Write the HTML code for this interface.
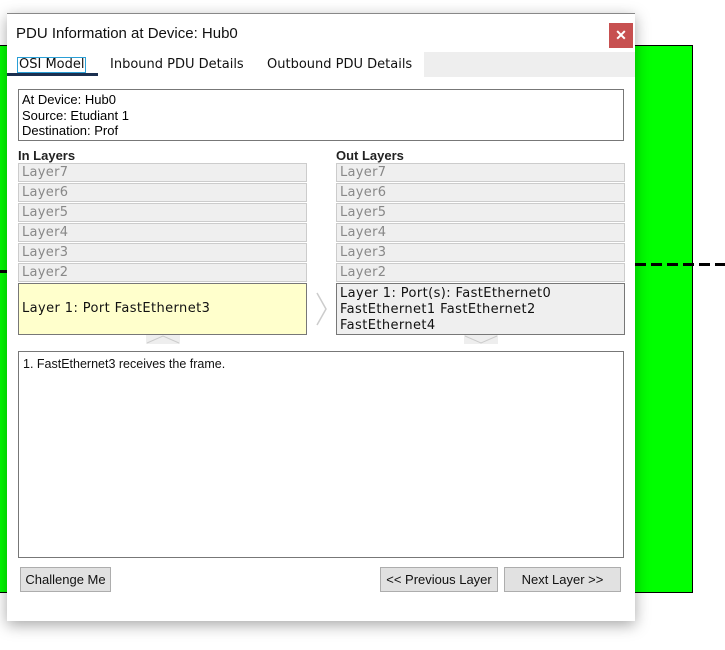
<!DOCTYPE html>
<html><head><style>
body{margin:0;width:725px;height:650px;position:relative;background:#fff;overflow:hidden;font-family:"Liberation Sans",sans-serif}
.green{position:absolute;left:-2px;top:45px;width:693px;height:546px;background:#00ff00;border:1px solid #000}
.dash{position:absolute;height:3px;background:repeating-linear-gradient(90deg,#000 0 11px,transparent 11px 16px)}
.dlg{position:absolute;left:7px;top:13px;width:628px;height:607px;background:#fff;border-top:1px solid #888;box-shadow:0 4px 14px rgba(0,0,0,.35)}
.abs{position:absolute}
.title{left:9px;top:11px;font-size:15px;color:#111}
.close{left:602px;top:9px;width:24px;height:25px;background:#c75050;color:#fff;font-size:14px;font-weight:bold;text-align:center;line-height:25px}
.tabs{font-family:"DejaVu Sans",sans-serif;font-size:13px;color:#111}
.info{left:11px;top:75px;font-size:13px;line-height:15.5px;padding:2px 3px;box-sizing:border-box;width:606px;height:52px;border:1px solid #777}
.hdr{font-size:13px;font-weight:bold;color:#222}
.ly{position:absolute;width:289px;height:19px;background:#efefef;border:1px solid #ccc;box-sizing:border-box;font-family:"DejaVu Sans",sans-serif;font-size:13px;color:#888;padding-left:3px;line-height:18px;letter-spacing:0.3px}
.l1{position:absolute;width:289px;height:52px;box-sizing:border-box;border:1px solid #777;font-family:"DejaVu Sans",sans-serif;font-size:13px;color:#111;padding:2px 3px;line-height:16px;letter-spacing:0.4px}
.btn{position:absolute;top:553px;height:25px;background:#e1e1e1;border:1px solid #adadad;box-sizing:border-box;font-size:13px;color:#111;text-align:center;line-height:23px}
</style></head><body>
<div class="green"></div>
<div class="dash" style="left:635px;top:263px;width:90px"></div>
<div class="dash" style="left:0;top:270px;width:7px"></div>
<div class="dlg">
<div class="abs title">PDU Information at Device: Hub0</div>
<div class="abs close">✕</div>
<div class="abs" style="left:417px;top:38px;width:211px;height:25px;background:#eee"></div>
<div class="abs tabs" style="left:10px;top:43px;border:1px solid #2a9fd6;padding:0 1px;line-height:14px">OSI Model</div>
<div class="abs" style="left:0;top:59px;width:91px;height:3px;background:#1b2f4f"></div>
<div class="abs tabs" style="left:103px;top:43px">Inbound PDU Details</div>
<div class="abs tabs" style="left:260px;top:43px">Outbound PDU Details</div>
<div class="abs info">At Device: Hub0<br>Source: Etudiant 1<br>Destination: Prof</div>
<div class="abs hdr" style="left:11px;top:134px">In Layers</div>
<div class="abs hdr" style="left:329px;top:134px">Out Layers</div>
<div class="ly" style="left:11px;top:149px">Layer7</div>
<div class="ly" style="left:11px;top:169px">Layer6</div>
<div class="ly" style="left:11px;top:189px">Layer5</div>
<div class="ly" style="left:11px;top:209px">Layer4</div>
<div class="ly" style="left:11px;top:229px">Layer3</div>
<div class="ly" style="left:11px;top:249px">Layer2</div>
<div class="l1" style="left:11px;top:269px;background:#ffffcc;line-height:50px;padding-top:0">Layer 1: Port FastEthernet3</div>
<div class="ly" style="left:329px;top:149px">Layer7</div>
<div class="ly" style="left:329px;top:169px">Layer6</div>
<div class="ly" style="left:329px;top:189px">Layer5</div>
<div class="ly" style="left:329px;top:209px">Layer4</div>
<div class="ly" style="left:329px;top:229px">Layer3</div>
<div class="ly" style="left:329px;top:249px">Layer2</div>
<div class="l1" style="left:329px;top:269px;background:#efefef">Layer 1: Port(s): FastEthernet0<br>FastEthernet1 FastEthernet2<br>FastEthernet4</div>
<svg class="abs" style="left:309px;top:278px" width="12" height="35"><path d="M1 1 L10 17 L1 33" fill="none" stroke="#ccc" stroke-width="1.5"/></svg>
<svg class="abs" style="left:139px;top:321px" width="34" height="9"><rect width="34" height="9" fill="#eee"/><path d="M1 8 L17 1 L33 8" fill="none" stroke="#ccc"/></svg>
<svg class="abs" style="left:457px;top:321px" width="34" height="9"><rect width="34" height="9" fill="#eee"/><path d="M1 1 L17 8 L33 1" fill="none" stroke="#ccc"/></svg>
<div class="abs" style="left:11px;top:337px;width:606px;height:207px;border:1px solid #777;box-sizing:border-box;font-size:12.5px;padding:5px 4px;color:#111">1. FastEthernet3 receives the frame.</div>
<div class="btn" style="left:13px;width:91px">Challenge Me</div>
<div class="btn" style="left:373px;width:118px">&lt;&lt; Previous Layer</div>
<div class="btn" style="left:497px;width:117px">Next Layer &gt;&gt;</div>
</div>
</body></html>
